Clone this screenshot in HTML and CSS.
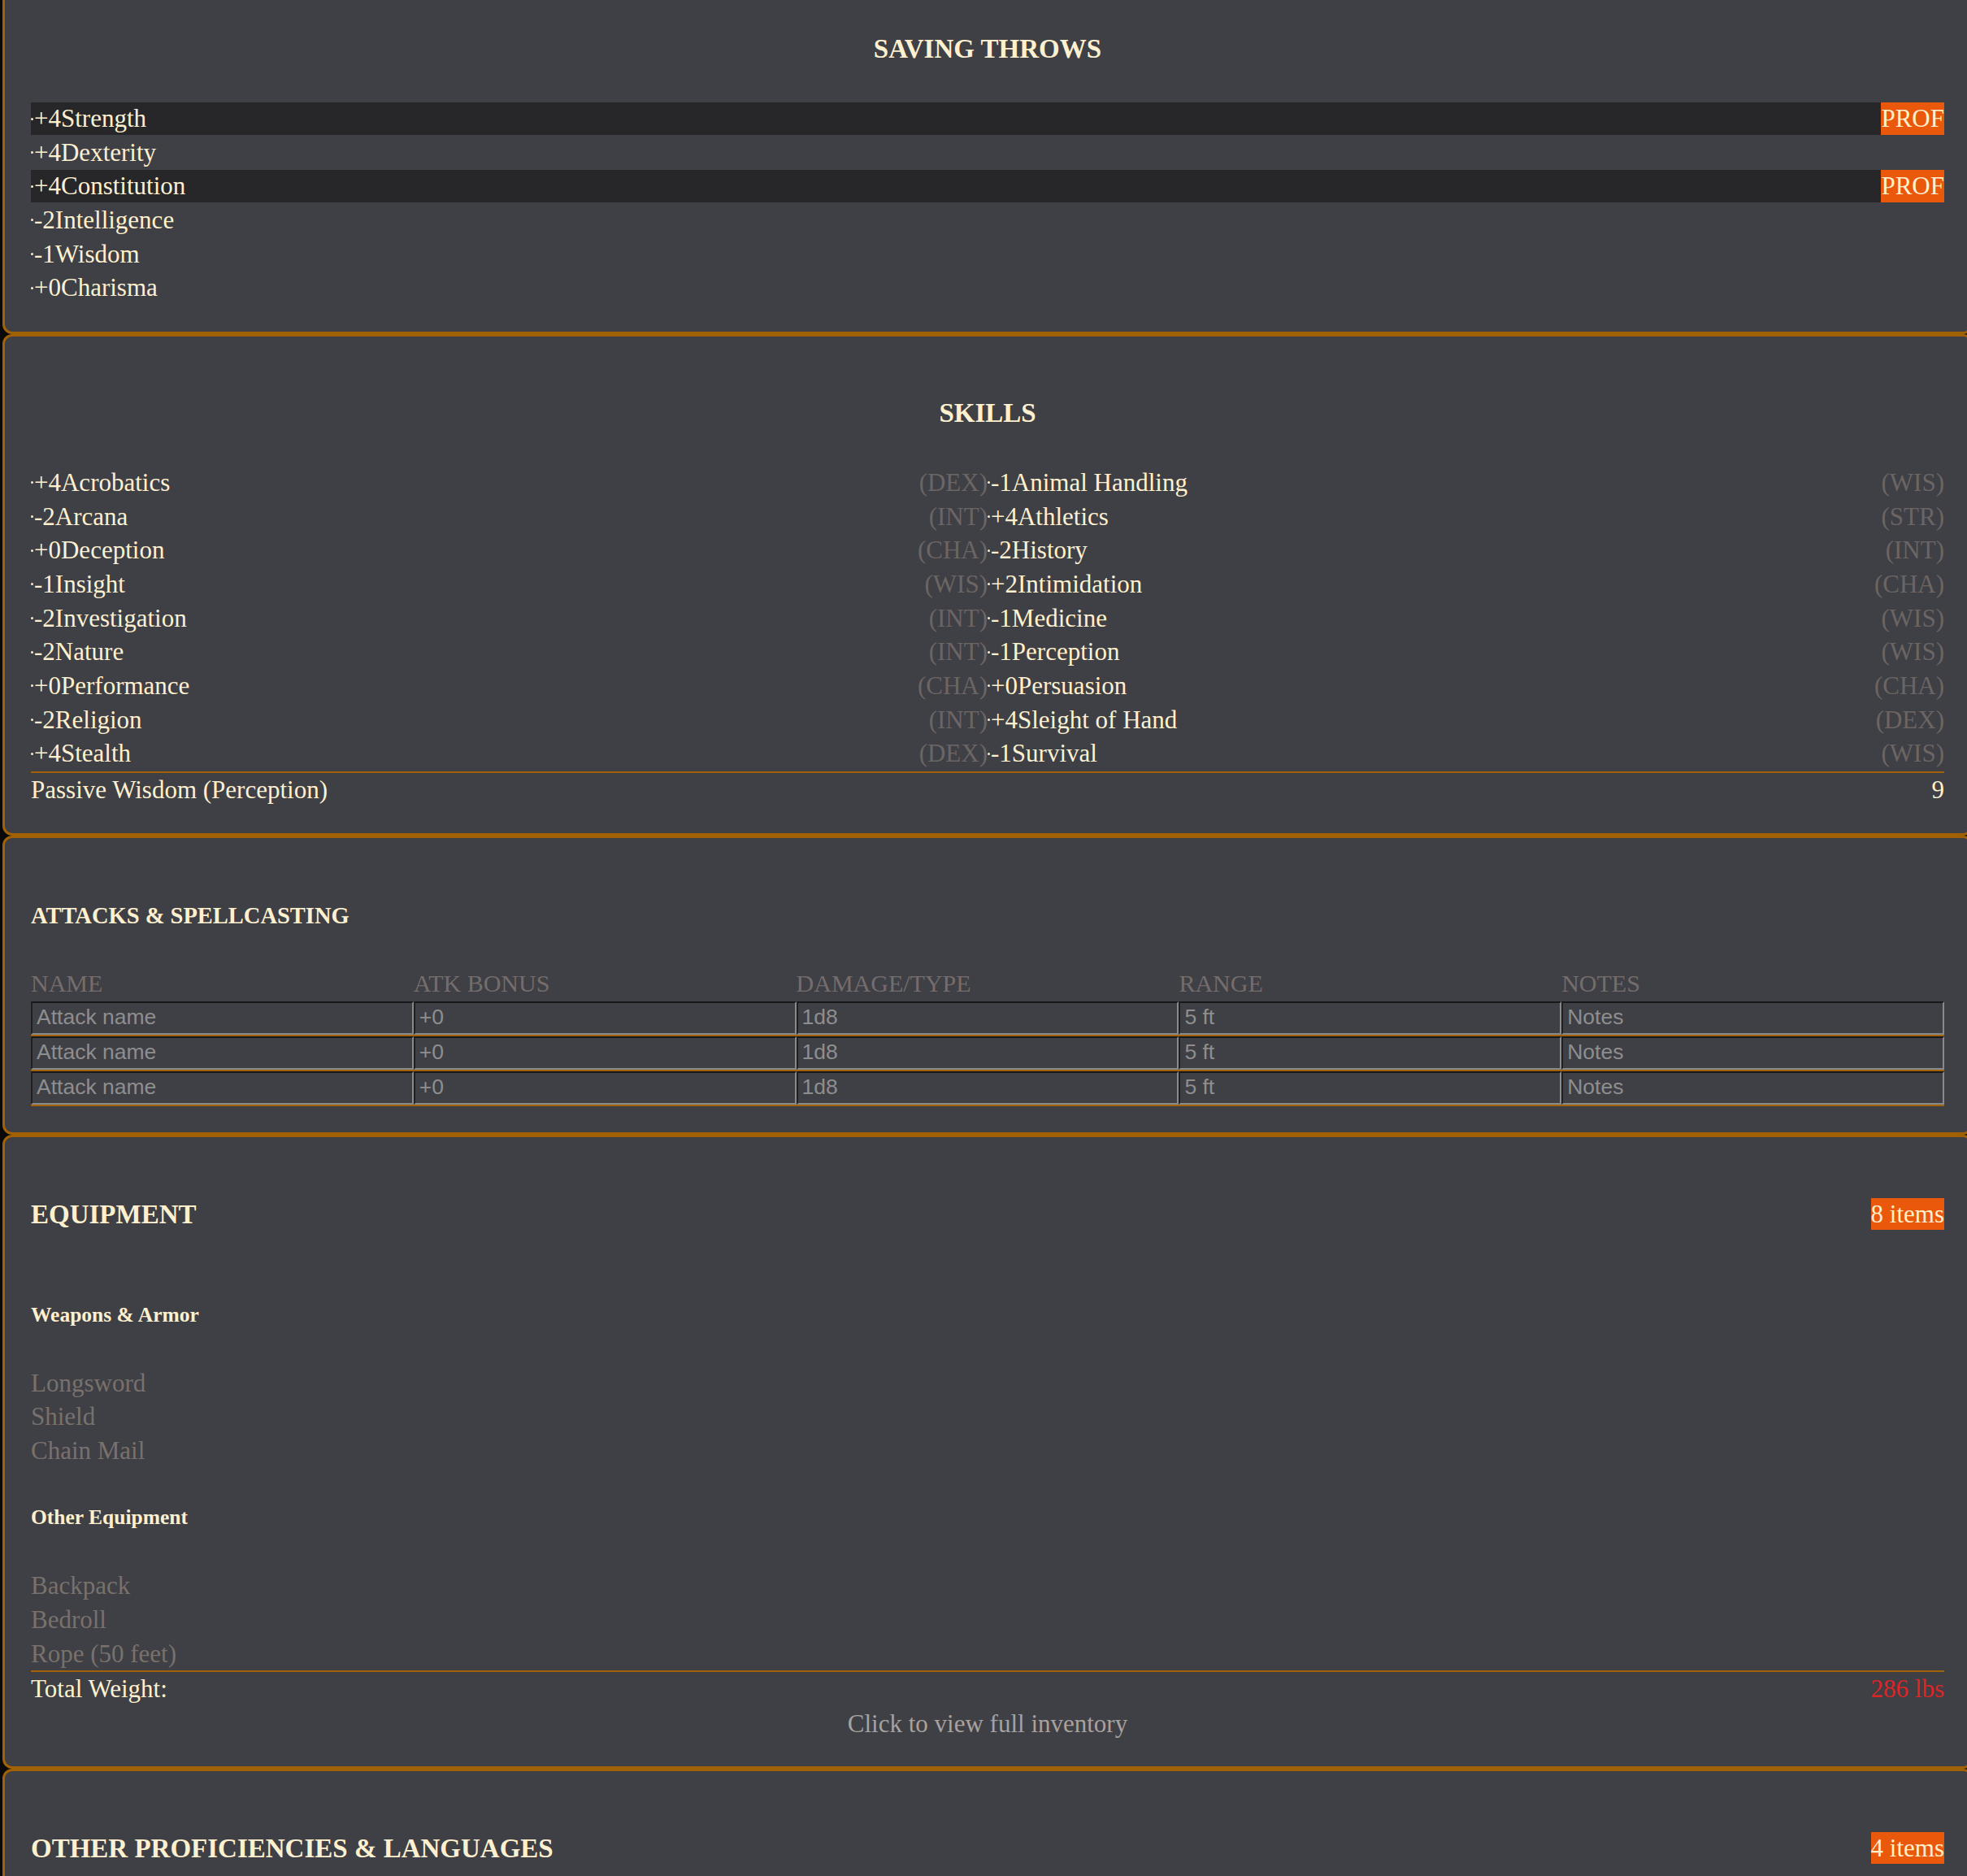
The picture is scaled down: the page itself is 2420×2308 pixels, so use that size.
FILE: index.html
```html
<!DOCTYPE html>
<html lang="en">
<head>
<meta charset="utf-8">
<title>Character Sheet</title>
<link rel="stylesheet" href="styles.css">
</head>
<body>
<main class="sheet">

  <section class="card">
    <h2 class="card-title centered">SAVING THROWS</h2>
    <div class="save-list">
      <div class="row prof"><span class="mod"><span class="dot"></span>+4</span><span class="label">Strength</span><span class="badge prof-badge">PROF</span></div>
      <div class="row"><span class="mod"><span class="dot"></span>+4</span><span class="label">Dexterity</span></div>
      <div class="row prof"><span class="mod"><span class="dot"></span>+4</span><span class="label">Constitution</span><span class="badge prof-badge">PROF</span></div>
      <div class="row"><span class="mod"><span class="dot"></span>-2</span><span class="label">Intelligence</span></div>
      <div class="row"><span class="mod"><span class="dot"></span>-1</span><span class="label">Wisdom</span></div>
      <div class="row"><span class="mod"><span class="dot"></span>+0</span><span class="label">Charisma</span></div>
    </div>
  </section>

  <section class="card">
    <h2 class="card-title centered">SKILLS</h2>
    <div class="skill-grid">
      <div class="row"><span class="mod"><span class="dot"></span>+4</span><span class="label">Acrobatics</span><span class="ability">(DEX)</span></div>
      <div class="row"><span class="mod"><span class="dot"></span>-1</span><span class="label">Animal Handling</span><span class="ability">(WIS)</span></div>
      <div class="row"><span class="mod"><span class="dot"></span>-2</span><span class="label">Arcana</span><span class="ability">(INT)</span></div>
      <div class="row"><span class="mod"><span class="dot"></span>+4</span><span class="label">Athletics</span><span class="ability">(STR)</span></div>
      <div class="row"><span class="mod"><span class="dot"></span>+0</span><span class="label">Deception</span><span class="ability">(CHA)</span></div>
      <div class="row"><span class="mod"><span class="dot"></span>-2</span><span class="label">History</span><span class="ability">(INT)</span></div>
      <div class="row"><span class="mod"><span class="dot"></span>-1</span><span class="label">Insight</span><span class="ability">(WIS)</span></div>
      <div class="row"><span class="mod"><span class="dot"></span>+2</span><span class="label">Intimidation</span><span class="ability">(CHA)</span></div>
      <div class="row"><span class="mod"><span class="dot"></span>-2</span><span class="label">Investigation</span><span class="ability">(INT)</span></div>
      <div class="row"><span class="mod"><span class="dot"></span>-1</span><span class="label">Medicine</span><span class="ability">(WIS)</span></div>
      <div class="row"><span class="mod"><span class="dot"></span>-2</span><span class="label">Nature</span><span class="ability">(INT)</span></div>
      <div class="row"><span class="mod"><span class="dot"></span>-1</span><span class="label">Perception</span><span class="ability">(WIS)</span></div>
      <div class="row"><span class="mod"><span class="dot"></span>+0</span><span class="label">Performance</span><span class="ability">(CHA)</span></div>
      <div class="row"><span class="mod"><span class="dot"></span>+0</span><span class="label">Persuasion</span><span class="ability">(CHA)</span></div>
      <div class="row"><span class="mod"><span class="dot"></span>-2</span><span class="label">Religion</span><span class="ability">(INT)</span></div>
      <div class="row"><span class="mod"><span class="dot"></span>+4</span><span class="label">Sleight of Hand</span><span class="ability">(DEX)</span></div>
      <div class="row"><span class="mod"><span class="dot"></span>+4</span><span class="label">Stealth</span><span class="ability">(DEX)</span></div>
      <div class="row"><span class="mod"><span class="dot"></span>-1</span><span class="label">Survival</span><span class="ability">(WIS)</span></div>
    </div>
    <div class="summary-row"><span>Passive Wisdom (Perception)</span><span>9</span></div>
  </section>

  <section class="card">
    <h3 class="sub-title">ATTACKS &amp; SPELLCASTING</h3>
    <div class="attack-head">
      <span>NAME</span><span>ATK BONUS</span><span>DAMAGE/TYPE</span><span>RANGE</span><span>NOTES</span>
    </div>
    <div class="attack-row">
      <div class="field">Attack name</div><div class="field">+0</div><div class="field">1d8</div><div class="field">5 ft</div><div class="field">Notes</div>
    </div>
    <div class="attack-row">
      <div class="field">Attack name</div><div class="field">+0</div><div class="field">1d8</div><div class="field">5 ft</div><div class="field">Notes</div>
    </div>
    <div class="attack-row">
      <div class="field">Attack name</div><div class="field">+0</div><div class="field">1d8</div><div class="field">5 ft</div><div class="field">Notes</div>
    </div>
  </section>

  <section class="card">
    <div class="card-head">
      <h2 class="head-title">EQUIPMENT</h2>
      <span class="badge count-badge">8 items</span>
    </div>
    <div class="equip-group">
      <h4 class="group-title">Weapons &amp; Armor</h4>
      <div class="item">Longsword</div>
      <div class="item">Shield</div>
      <div class="item">Chain Mail</div>
    </div>
    <div class="equip-group">
      <h4 class="group-title">Other Equipment</h4>
      <div class="item">Backpack</div>
      <div class="item">Bedroll</div>
      <div class="item">Rope (50 feet)</div>
    </div>
    <div class="summary-row"><span>Total Weight:</span><span class="weight">286 lbs</span></div>
    <div class="inventory-link">Click to view full inventory</div>
  </section>

  <section class="card card-last">
    <div class="card-head">
      <h2 class="head-title">OTHER PROFICIENCIES &amp; LANGUAGES</h2>
      <span class="badge count-badge">4 items</span>
    </div>
  </section>

</main>
</body>
</html>
```

FILE: styles.css
```css
html {
  overflow: hidden;
}

body {
  margin: 0;
  background: #09090b;
  color: #fdf0cf;
  font-family: "Liberation Serif", "Times New Roman", serif;
  font-size: 31px;
}

.sheet {
  width: 2424px;
  margin: -37px 0 0 3px;
}

.card {
  background: #3f3f46;
  border: 3px solid #a16207;
  border-radius: 12px;
  padding: 32px;
}

.card-last {
  padding-bottom: 120px;
}

.card-title {
  margin: 40px 0 44px;
  font-size: 33px;
  line-height: 44px;
  font-weight: bold;
}

.centered {
  text-align: center;
}

.row {
  display: flex;
  align-items: center;
  height: 40px;
  margin-bottom: 1.67px;
  line-height: 40px;
  white-space: nowrap;
}

.row.prof {
  background: #27272a;
}

.mod {
  display: inline-flex;
  align-items: center;
}

.dot {
  display: inline-block;
  width: 3px;
  height: 3px;
  border-radius: 50%;
  background: #fdf0cf;
  margin-right: 1px;
}

.label {
  flex: 1;
}

.badge {
  background: #ea580c;
  color: #fdf0cf;
  white-space: nowrap;
}

.prof-badge {
  height: 40px;
  line-height: 40px;
}

.skill-grid {
  display: grid;
  grid-template-columns: 1fr 1fr;
}

.ability {
  color: #6b6563;
}

.summary-row {
  display: flex;
  justify-content: space-between;
  border-top: 2px solid #a16207;
  height: 41.67px;
  line-height: 42px;
}

.sub-title {
  margin: 39px 0 38px;
  font-size: 28.5px;
  line-height: 50px;
  font-weight: bold;
}

.attack-head {
  display: grid;
  grid-template-columns: repeat(5, 1fr);
  color: #746d6b;
  font-size: 30px;
  line-height: 40px;
  height: 42px;
}

.attack-row {
  display: grid;
  grid-template-columns: repeat(5, 1fr);
  border-bottom: 2px solid #a16207;
}

.field {
  box-sizing: border-box;
  height: 41px;
  padding-left: 5px;
  border-top: 2px solid #18181b;
  border-left: 2px solid #202023;
  border-bottom: 2px solid #8a8a8a;
  border-right: 2px solid #8a8a8a;
  font-family: "Liberation Sans", Arial, sans-serif;
  font-size: 26.5px;
  line-height: 35px;
  color: #8e8e8e;
  white-space: nowrap;
  overflow: hidden;
}

.card-head {
  display: flex;
  justify-content: space-between;
  align-items: center;
  margin: 41px 0 40px;
  height: 44px;
}

.head-title {
  margin: 0;
  font-size: 33px;
  line-height: 44px;
  font-weight: bold;
}

.count-badge {
  height: 39px;
  line-height: 39px;
}

.equip-group {
  padding-top: 44px;
}

.group-title {
  margin: 0 0 45px;
  font-size: 25.5px;
  line-height: 36px;
  font-weight: bold;
}

.item {
  height: 41.67px;
  line-height: 42px;
  color: #78716c;
}

.weight {
  color: #dc2626;
}

.inventory-link {
  text-align: center;
  color: #a8a29e;
  height: 41.67px;
  line-height: 44px;
}
```
